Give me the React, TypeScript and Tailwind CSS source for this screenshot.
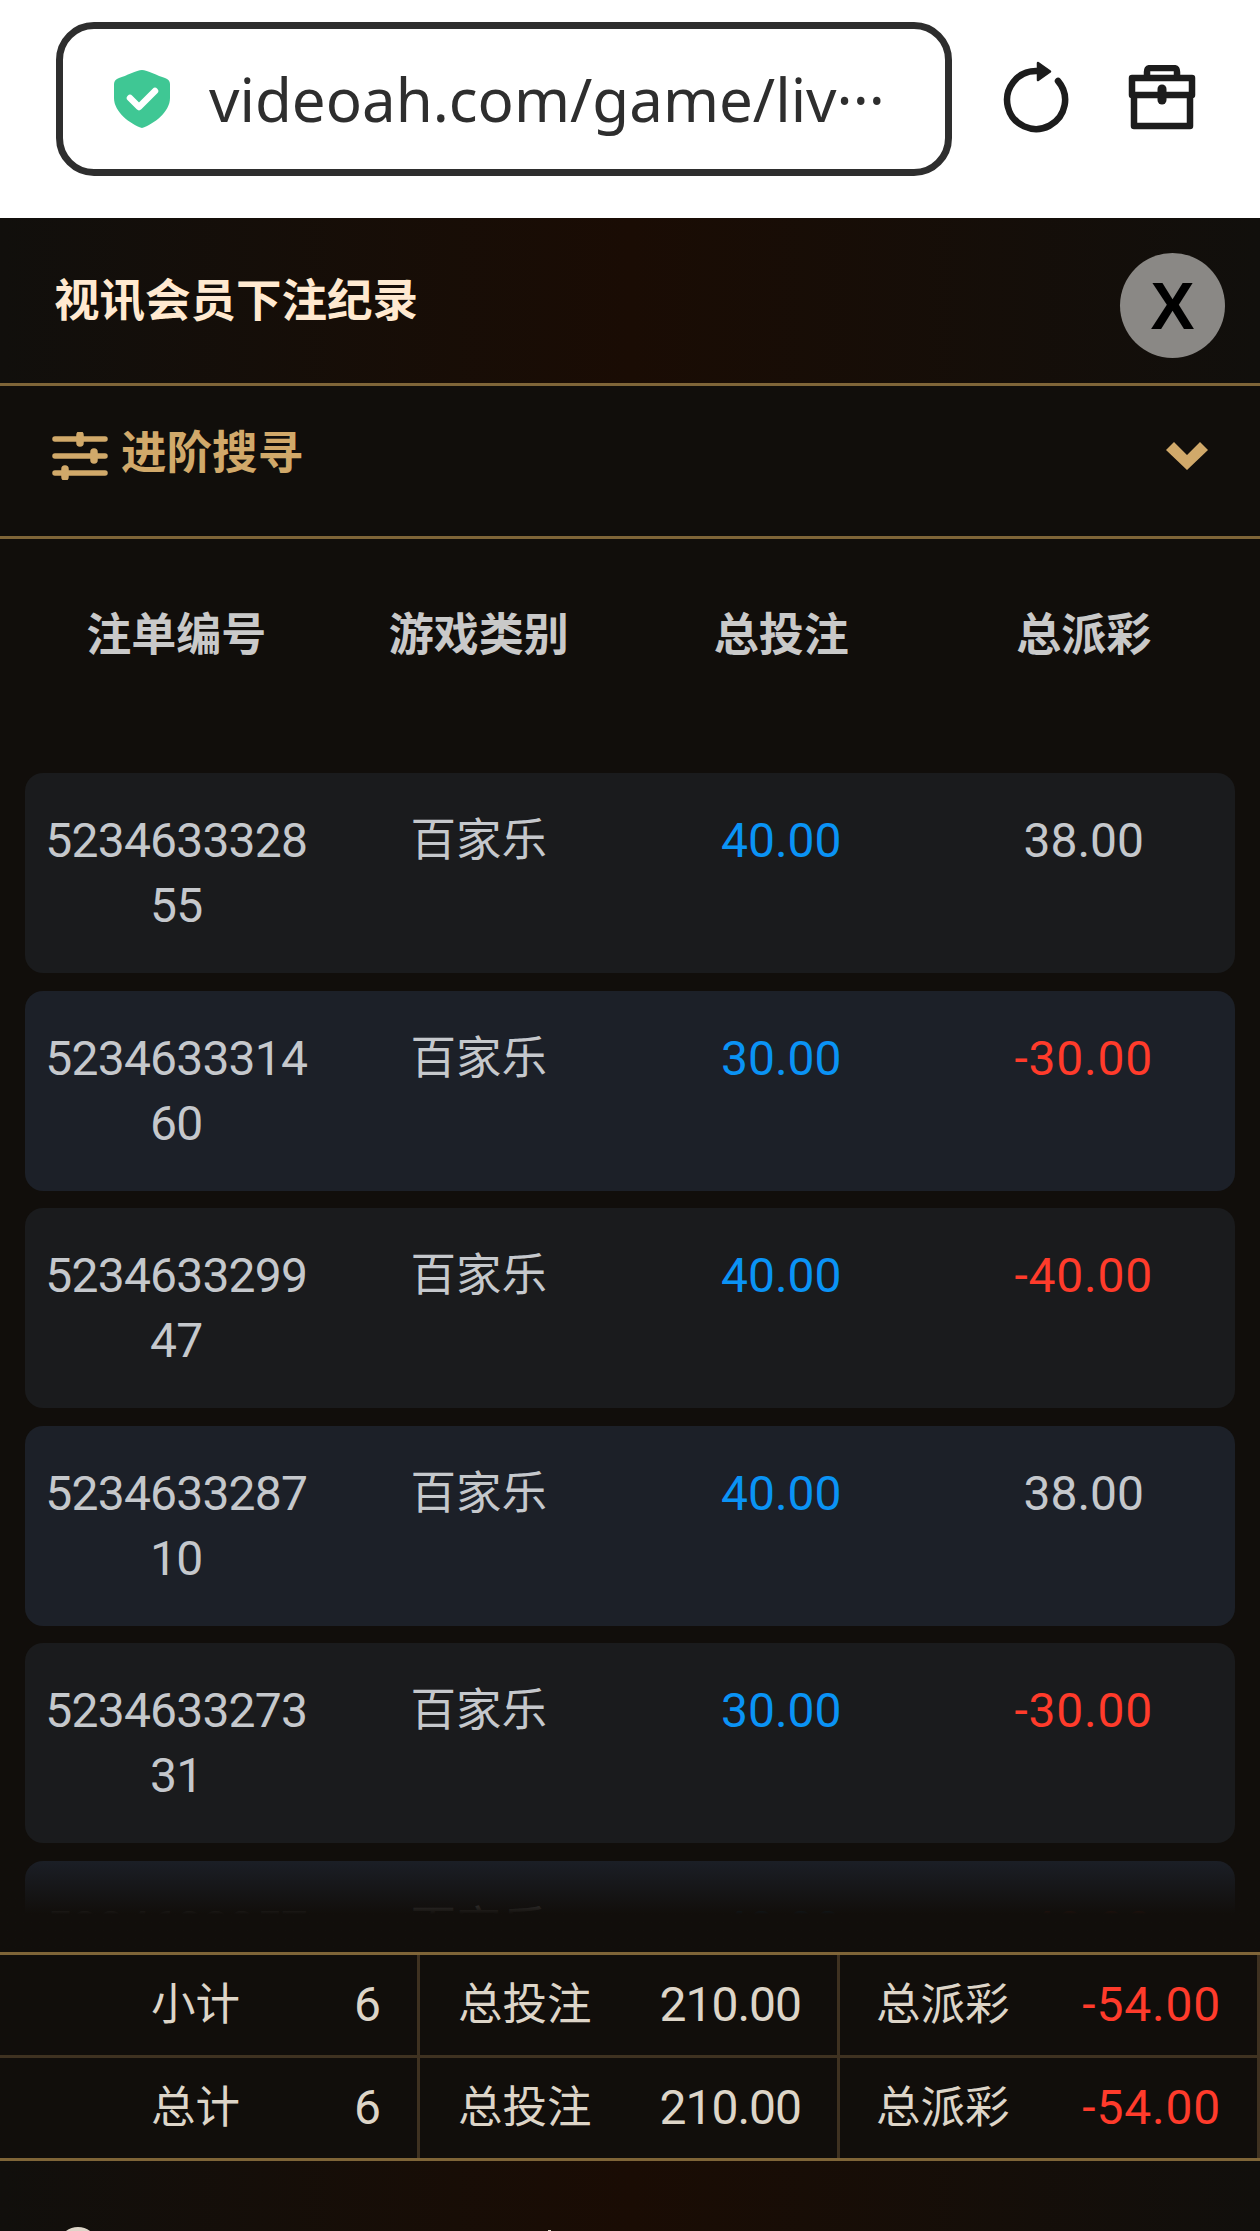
const FONT = "font-['Roboto','Noto_Sans_CJK_SC',sans-serif]";

const rows = [
  { id: "523463332855", game: "百家乐", bet: "40.00", pay: "38.00", alt: false },
  { id: "523463331460", game: "百家乐", bet: "30.00", pay: "-30.00", alt: true },
  { id: "523463329947", game: "百家乐", bet: "40.00", pay: "-40.00", alt: false },
  { id: "523463328710", game: "百家乐", bet: "40.00", pay: "38.00", alt: true },
  { id: "523463327331", game: "百家乐", bet: "30.00", pay: "-30.00", alt: false },
  { id: "523463325755", game: "百家乐", bet: "40.00", pay: "-40.00", alt: true },
];

const totals = [
  { label: "小计", border: "border-b-[3px] border-[#3f3221]" },
  { label: "总计", border: "" },
];

function Shield() {
  return (
    <svg width="56" height="58" viewBox="0 0 56 58" className="shrink-0">
      <path
        d="M28 0C33 0 44 6 51 8C54 9 56 11 56 14V28C56 42 40 54 28 58C16 54 0 42 0 28V14C0 11 2 9 5 8C12 6 23 0 28 0Z"
        fill="#3fc794"
      />
      <path d="M16 28L25 37L41 21" fill="none" stroke="#fff" strokeWidth="6.5" strokeLinecap="round" strokeLinejoin="round" />
    </svg>
  );
}

function Reload() {
  return (
    <svg width="66" height="74" viewBox="0 0 66 74">
      <path d="M55 21A29 29 0 1 1 33 11H40" fill="none" stroke="#1c1c1c" strokeWidth="6.5" strokeLinecap="round" />
      <path d="M35 3L47 11.5L35 20Z" fill="#1c1c1c" stroke="#1c1c1c" strokeWidth="2.5" strokeLinejoin="round" />
    </svg>
  );
}

function Briefcase() {
  return (
    <svg width="68" height="66" viewBox="0 0 68 66" fill="none" stroke="#1c1c1c" strokeWidth="6.5" strokeLinejoin="round" strokeLinecap="round">
      <path d="M6 32V61H62V32" />
      <path d="M4 13H64V30H4Z" />
      <path d="M19 12V7C19 4 20 3 23 3H45C48 3 49 4 49 7V12" />
      <path d="M34 24V35" strokeWidth="9" />
    </svg>
  );
}

function Sliders() {
  return (
    <svg width="56" height="48" viewBox="0 0 56 48" className="shrink-0" stroke="#d1a96a" strokeLinecap="round" fill="none">
      <path d="M3 7H53M3 24H53M3 41H53" strokeWidth="5.5" />
      <path d="M28 3V11M42 20V28M13 37V45" strokeWidth="7.5" />
    </svg>
  );
}

function Chevron() {
  return (
    <svg width="42" height="28" viewBox="0 0 42 28">
      <path d="M8 0L21 13L34 0L42 8L21 28L0 8Z" fill="#d1a96a" />
    </svg>
  );
}

function Divider() {
  return <div className="h-[3px] bg-[#7f6538] shrink-0" />;
}

export default function App() {
  return (
    <div className={`${FONT} w-[1260px] h-[2231px] overflow-hidden flex flex-col bg-[#110e0b]`}>
      {/* browser bar */}
      <div className="h-[218px] bg-white shrink-0 flex items-start pt-[22px] pl-[56px]">
        <div className="w-[896px] h-[154px] border-[7px] border-[#2e2e2e] rounded-[38px] flex items-center pl-[51px] gap-[39px] shrink-0">
          <Shield />
          <span className="font-['Noto_Sans',sans-serif] text-[60px] leading-none text-[#2e2e2e] whitespace-nowrap">
            videoah.com/game/liv···
          </span>
        </div>
        <div className="ml-[51px] mt-[38px] flex items-start gap-[59px]">
          <Reload />
          <div className="mt-[5px]">
            <Briefcase />
          </div>
        </div>
      </div>

      {/* title */}
      <div className="h-[165px] shrink-0 flex items-center justify-between pl-[54px] pr-[35px] bg-gradient-to-r from-[#110f0c] via-[#1a0c04] to-[#110f0c]">
        <span className="text-[45.5px] font-bold text-[#ffe9d0] relative top-[2px]">视讯会员下注纪录</span>
        <button className="w-[105px] h-[105px] rounded-full bg-[#8a8885] flex items-center justify-center relative top-[5px] text-black font-['Liberation_Sans',sans-serif] font-bold text-[66px] leading-none">
          X
        </button>
      </div>
      <Divider />

      {/* filter */}
      <div className="h-[150px] shrink-0 flex items-center justify-between px-[52px] pb-[10px]">
        <div className="flex items-center gap-[13px]">
          <Sliders />
          <span className="text-[45.5px] font-bold text-[#d1a96a] relative -top-[2px]">进阶搜寻</span>
        </div>
        <Chevron />
      </div>
      <Divider />

      {/* table */}
      <div className="flex-1 min-h-0 relative overflow-hidden">
        <div className="px-[25px] grid grid-cols-4 pt-[64px] pb-[105px] text-center text-[45px] leading-[65px] font-bold text-[#c9c9c9]">
          <div>注单编号</div>
          <div>游戏类别</div>
          <div>总投注</div>
          <div>总派彩</div>
        </div>
        <div className="px-[25px] flex flex-col gap-[17.5px]">
          {rows.map((r) => (
            <div
              key={r.id}
              className={`h-[200px] rounded-[18px] grid grid-cols-4 pt-[35px] text-center text-[48px] leading-[65px] ${
                r.alt ? "bg-[#1c2028]" : "bg-[#1a1b1d]"
              }`}
            >
              <div className="px-[10px] break-all text-[#c5c8cc] tracking-[-0.8px]">{r.id}</div>
              <div className="text-[#c5c8cc] text-[45.5px]">{r.game}</div>
              <div className="text-[#0a93f5]">{r.bet}</div>
              <div className={r.pay.startsWith("-") ? "text-[#ff3b2b] tracking-[0.8px]" : "text-[#c5c8cc]"}>{r.pay}</div>
            </div>
          ))}
        </div>
        <div className="absolute left-0 right-0 bottom-0 h-[95px] bg-gradient-to-b from-[#110e0b00] via-[#110e0b] via-60% to-[#110e0b]" />
      </div>

      {/* totals */}
      <div className="shrink-0 border-y-[3px] border-[#7f6538] text-[#ddd5c8] text-[48px]">
        {totals.map((t) => (
          <div key={t.label} className={`grid grid-cols-3 h-[100px] box-content ${t.border}`}>
            <div className="border-r-[3px] border-[#3f3221] flex items-center justify-between pl-[151px] pr-[36px]">
              <span className="text-[44.5px]">{t.label}</span>
              <span>6</span>
            </div>
            <div className="border-r-[3px] border-[#3f3221] flex items-center justify-between pl-[38px] pr-[36px]">
              <span className="text-[44.5px]">总投注</span>
              <span className="tracking-[-1px]">210.00</span>
            </div>
            <div className="border-r-[3px] border-[#3f3221] flex items-center justify-between pl-[36px] pr-[36px]">
              <span className="text-[44.5px]">总派彩</span>
              <span className="text-[#ff3b2b] tracking-[0.8px]">-54.00</span>
            </div>
          </div>
        ))}
      </div>

      {/* clipped footer */}
      <div className="h-[70px] shrink-0 bg-gradient-to-r from-[#110f0c] via-[#1a0c04] to-[#110f0c] pl-[58px] pt-[66px] flex items-start">
        <div className="w-[40px] h-[40px] rounded-full border-[4px] border-[#ddd5c8] shrink-0" />
        <div className="ml-[450px] mt-[3px] w-[3px] h-[10px] bg-[#ddd5c8] shrink-0" />
      </div>
    </div>
  );
}
